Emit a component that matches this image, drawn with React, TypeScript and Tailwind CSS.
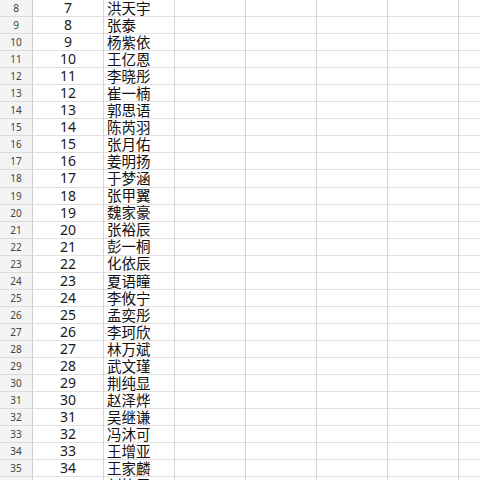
const names = [
  "洪天宇", "张泰", "杨紫依", "王亿恩", "李晓彤", "崔一楠", "郭思语", "陈芮羽",
  "张月佑", "姜明扬", "于梦涵", "张甲翼", "魏家豪", "张裕辰", "彭一桐", "化依辰",
  "夏语瞳", "李攸宁", "孟奕彤", "李珂欣", "林万斌", "武文瑾", "荆纯显", "赵泽烨",
  "吴继谦", "冯沐可", "王增亚", "王家麟", "刘筱雯",
];

const emptyCols = [0, 1, 2, 3, 4];

const App = () => {
  return (
    <div className="w-[480px] h-[480px] overflow-hidden bg-white">
      <div className="flex flex-col">
        {names.map((name, i) => {
          const rowNum = i + 8;
          const selected = rowNum === 26;
          return (
            <div key={rowNum} className="flex h-[17.06px] shrink-0 leading-none">
              <div className="w-[33px] shrink-0 flex items-center justify-center bg-[#f4f4f4] border-r border-r-[#cfcfcf] border-b border-b-[#dcdcdc] text-[10px] text-[#444] font-['Noto_Sans',sans-serif]">
                {rowNum}
              </div>
              <div className="w-[71px] shrink-0 flex items-center justify-center border-r border-r-[#d6d6d6] border-b border-b-[#e0e0e0] text-[14px] text-[#1a1a1a] font-['Noto_Sans',sans-serif]">
                {rowNum - 1}
              </div>
              <div className="w-[71px] shrink-0 flex items-center pl-[3px] border-r border-r-[#d6d6d6] border-b border-b-[#e0e0e0] text-[14.5px] text-[#111] font-['Noto_Sans_CJK_SC',sans-serif] whitespace-nowrap">
                {name}
              </div>
              {emptyCols.map((c) => (
                <div
                  key={c}
                  className="w-[71px] shrink-0 border-r border-r-[#d6d6d6] border-b border-b-[#e0e0e0]"
                />
              ))}
              <div className="relative w-[71px] shrink-0 border-b border-b-[#e0e0e0]">
                {selected && (
                  <div className="absolute -top-px -left-[2px] -bottom-px right-0 border-2 border-[#22a861]" />
                )}
              </div>
            </div>
          );
        })}
      </div>
    </div>
  );
};

export default App;
